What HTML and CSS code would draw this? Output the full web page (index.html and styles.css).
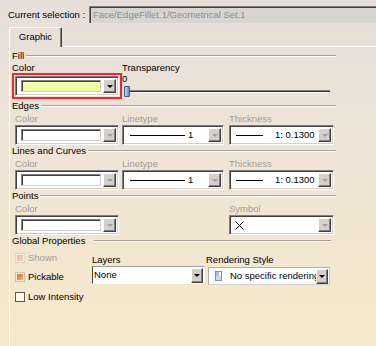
FILE: index.html
```html
<!DOCTYPE html>
<html lang="en">
<head>
    <meta charset="UTF-8">
    <title>Graphic Properties</title>
    <link rel="stylesheet" href="styles.css">
</head>
<body>
    <div class="top">
        <span class="top-label">Current selection :</span>
        <div class="selection">Face/EdgeFillet.1/Geometrical Set.1</div>
    </div>

    <div class="tabs">
        <div class="tab">Graphic</div>
        <div class="tab-fill"></div>
    </div>

    <div class="panel">
        <div class="group"><span>Fill</span><i class="rule"></i></div>
        <div class="fill-row">
            <div class="fill-color">
                <div class="lbl">Color</div>
                <div class="hilite">
                    <div class="combo w104">
                        <span class="swatch yellow"></span>
                        <span class="btn"><i></i></span>
                    </div>
                </div>
            </div>
            <div class="transparency">
                <div class="lbl">Transparency</div>
                <div class="lbl">0</div>
                <div class="slider">
                    <span class="thumb"></span>
                    <span class="track"></span>
                </div>
            </div>
        </div>

        <div class="group"><span>Edges</span><i class="rule"></i></div>
        <div class="row">
            <div class="field">
                <div class="lbl off">Color</div>
                <div class="combo w104"><span class="swatch"></span><span class="btn off"><i></i></span></div>
            </div>
            <div class="field">
                <div class="lbl off">Linetype</div>
                <div class="combo w102"><span class="line lt"></span><span class="num">1</span><span class="btn off"><i></i></span></div>
            </div>
            <div class="field">
                <div class="lbl off">Thickness</div>
                <div class="combo w105"><span class="line th"></span><span class="num th-num">1: 0.1300</span><span class="btn off"><i></i></span></div>
            </div>
        </div>

        <div class="group"><span>Lines and Curves</span><i class="rule"></i></div>
        <div class="row">
            <div class="field">
                <div class="lbl off">Color</div>
                <div class="combo w104"><span class="swatch"></span><span class="btn off"><i></i></span></div>
            </div>
            <div class="field">
                <div class="lbl off">Linetype</div>
                <div class="combo w102"><span class="line lt"></span><span class="num">1</span><span class="btn off"><i></i></span></div>
            </div>
            <div class="field">
                <div class="lbl off">Thickness</div>
                <div class="combo w105"><span class="line th"></span><span class="num th-num">1: 0.1300</span><span class="btn off"><i></i></span></div>
            </div>
        </div>

        <div class="group"><span>Points</span><i class="rule"></i></div>
        <div class="row">
            <div class="field">
                <div class="lbl off">Color</div>
                <div class="combo w104"><span class="swatch"></span><span class="btn off"><i></i></span></div>
            </div>
            <div class="field"></div>
            <div class="field">
                <div class="lbl off">Symbol</div>
                <div class="combo w105">
                    <svg class="cross" width="9" height="9" viewBox="0 0 9 9"><path d="M0.5 0.5L8.5 8.5M8.5 0.5L0.5 8.5" stroke="#000" stroke-width="1" fill="none"/></svg>
                    <span class="btn off"><i></i></span>
                </div>
            </div>
        </div>

        <div class="group global-head"><span>Global Properties</span><i class="rule"></i></div>
        <div class="global">
            <div class="checks">
                <div class="check off"><span class="box on"></span>Shown</div>
                <div class="check"><span class="box on"></span>Pickable</div>
                <div class="check"><span class="box"></span>Low Intensity</div>
            </div>
            <div class="layers">
                <div class="lbl">Layers</div>
                <div class="flat w113">
                    <span class="txt">None</span>
                    <span class="btn"><i></i></span>
                </div>
            </div>
            <div class="render">
                <div class="lbl">Rendering Style</div>
                <div class="flat w122">
                    <svg class="doc" width="7" height="10" viewBox="0 0 7 10">
                        <rect x="0.5" y="0.5" width="6" height="9" fill="#fff" stroke="#8090b0"/>
                        <rect x="1" y="1" width="3" height="8" fill="#a8c0e8"/>
                        <rect x="1" y="5" width="5" height="4" fill="#c8d8f0"/>
                    </svg>
                    <span class="txt">No specific rendering</span>
                    <span class="btn"><i></i></span>
                </div>
            </div>
        </div>
    </div>
</body>
</html>
```

FILE: styles.css
```css
* {
    box-sizing: border-box;
}
body {
    margin: 0;
    width: 376px;
    height: 346px;
    overflow: hidden;
    font-family: "Liberation Sans", Arial, sans-serif;
    font-size: 9.5px;
    line-height: 12px;
    color: #000;
    background: linear-gradient(#e6ded8, #efe4d6 45%, #f6e9cb);
}

/* current selection */
.top {
    display: flex;
    align-items: center;
    padding: 6px 0 0 8px;
}
.top-label {
    width: 81px;
    flex-shrink: 0;
}
.selection {
    flex: 1;
    height: 17px;
    border-top: 1px solid #808080;
    border-left: 1px solid #808080;
    box-shadow: inset 1px 1px #404040;
    background: #d8d4ce;
    color: #8c8c8c;
    padding-left: 3px;
    line-height: 15px;
    white-space: nowrap;
}

/* tab */
.tabs {
    display: flex;
    margin-top: 4px;
    padding-left: 9px;
}
.tab {
    width: 53px;
    height: 20px;
    border-left: 1px solid #fff;
    border-top: 1px solid #fff;
    border-right: 1px solid #404040;
    box-shadow: inset -1px 0 #808080;
    border-radius: 2px 2px 0 0;
    text-align: center;
    line-height: 18px;
}
.tab-fill {
    flex: 1;
    border-bottom: 1px solid #fff;
}

.panel {
    margin-left: 9px;
    border-left: 1px solid #fff;
    padding: 3px 0 0 2px;
    height: 300px;
}

/* group headings */
.group {
    display: flex;
    align-items: center;
    width: 324px;
    height: 12px;
}
.rule {
    flex: 1;
    height: 2px;
    margin-left: 2px;
    border-top: 1px solid #a8a09a;
    border-bottom: 1px solid #fff;
}
.global-head {
    width: 319px;
}
.global-head .rule {
    margin-left: 9px;
}

.lbl {
    white-space: nowrap;
}
.lbl.off {
    color: #9c9c9c;
}

/* fill */
.fill-row {
    display: flex;
    margin-bottom: 1px;
}
.fill-row .lbl {
    line-height: 11px;
}
.fill-color {
    width: 110px;
}
.hilite {
    width: 110px;
    border: 2px solid #ec2830;
    padding: 1px;
}
.transparency {
    width: 210px;
}
.slider {
    display: flex;
    align-items: center;
    height: 12px;
    margin-top: 1px;
}
.thumb {
    width: 6px;
    height: 11px;
    margin-left: 2px;
    border: 1px solid #3c5a88;
    border-radius: 1px;
    background: linear-gradient(90deg, #c8d8ea, #6a8cc0);
}
.track {
    flex: 1;
    height: 3px;
    border-top: 1px solid #808080;
    border-bottom: 1px solid #fff;
    background: #303030;
    margin-right: 2px;
}

/* rows of combos */
.row {
    display: grid;
    grid-template-columns: 107px 107px 107px;
    padding-left: 3px;
}
.row .lbl {
    margin-top: 1px;
}

.combo {
    display: flex;
    align-items: center;
    height: 20px;
    background: #fff;
    border: 1px solid;
    border-color: #808080 #fff #fff #808080;
    box-shadow: inset 1px 1px #404040, inset -1px -1px #d4d0c8;
    padding: 2px;
}
.w102 { width: 102px; }
.w104 { width: 104px; }
.w105 { width: 105px; }
.w113 { width: 113px; }
.w122 { width: 122px; }

.swatch {
    width: 80px;
    height: 12px;
    margin-left: 3px;
    background: #fff;
    border-top: 1px solid #808080;
    border-left: 1px solid #808080;
    border-bottom: 1px solid #d4d0c8;
    border-right: 1px solid #d4d0c8;
    box-shadow: inset 1px 1px #404040;
}
.swatch.yellow {
    background: #eeffa8;
}

.btn {
    margin-left: auto;
    width: 13px;
    height: 14px;
    flex-shrink: 0;
    display: flex;
    align-items: center;
    justify-content: center;
    background: #d4d0c8;
    border: 1px solid;
    border-color: #fff #404040 #404040 #fff;
    box-shadow: inset -1px -1px #808080;
}
.btn i {
    width: 0;
    height: 0;
    border-left: 3px solid transparent;
    border-right: 3px solid transparent;
    border-top: 3px solid #000;
}
.btn.off i {
    border-top-color: #a0a0a0;
}

.line {
    height: 1px;
    background: #000;
}
.line.lt {
    width: 55px;
    margin-left: 5px;
}
.line.th {
    width: 27px;
    margin-left: 4px;
}
.num {
    margin-left: 3px;
}
.th-num {
    margin-left: 12px;
}
.cross {
    margin-left: 3px;
}

/* global properties */
.global {
    display: flex;
}
.checks {
    width: 80px;
    padding: 1px 0 0 3px;
}
.check {
    display: flex;
    align-items: center;
    height: 19.5px;
    white-space: nowrap;
}
.check.off {
    color: #a0a0a0;
}
.box {
    width: 10px;
    height: 10px;
    margin-right: 3px;
    border: 1px solid #5a5a5a;
    background: #fffbe8;
}
.box.on {
    border-color: #c8c0b8;
    padding: 1px;
    background: #f4eee6;
}
.box.on::before {
    content: "";
    display: block;
    width: 6px;
    height: 6px;
    background: linear-gradient(135deg, #e06a18, #f6b070);
}
.check.off .box.on {
    border-color: #ddd4cc;
}
.check.off .box.on::before {
    background: linear-gradient(135deg, #ebb898, #f4d8c0);
}

.layers {
    width: 114px;
    padding-top: 7px;
}
.render {
    padding-top: 7px;
}
.render .flat {
    margin-left: 2px;
    margin-top: 1px;
}
.flat {
    display: flex;
    align-items: center;
    height: 18px;
    background: #fff;
    border: 1px solid;
    border-color: #a0a0a0 #fff #fff #404040;
    padding: 1px 1px 1px 0;
}
.render .flat {
    border-color: #b0b0b0 #c8c8c8 #d0d0d0 #b0b0b0;
}
.flat .txt {
    padding-left: 1px;
    white-space: nowrap;
    overflow: hidden;
    flex: 1;
}
.flat .btn {
    height: 15px;
    width: 12px;
}
.doc {
    margin: 0 7px 0 6px;
    flex-shrink: 0;
}
```
